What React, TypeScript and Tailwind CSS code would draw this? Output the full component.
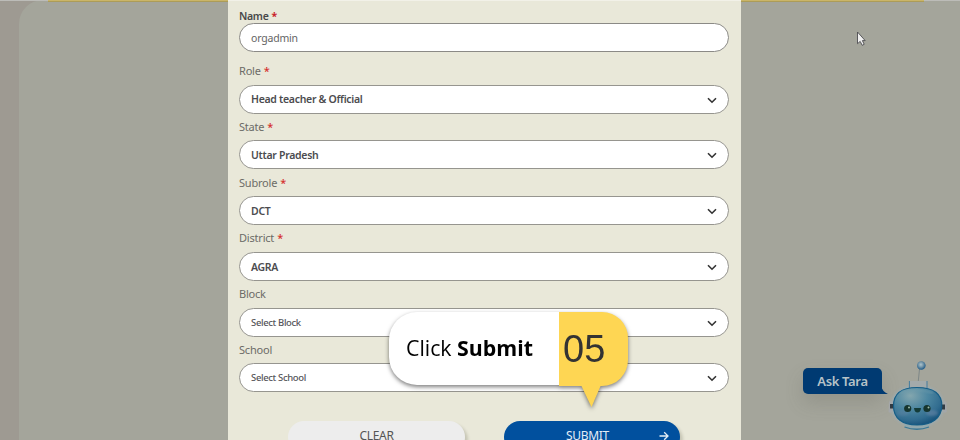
type Field = { label: string; value: string; required?: boolean; empty?: boolean };

const fields: Field[] = [
  { label: "Role", value: "Head teacher & Official", required: true },
  { label: "State", value: "Uttar Pradesh", required: true },
  { label: "Subrole", value: "DCT", required: true },
  { label: "District", value: "AGRA", required: true },
  { label: "Block", value: "Select Block", empty: true },
  { label: "School", value: "Select School", empty: true },
];

function SelectField({ label, value, required, empty }: Field) {
  return (
    <div className="h-[55.75px]">
      <div className="flex h-[21.5px] items-start text-[11px] leading-[15px] tracking-[-0.2px] text-[#6c6b67]">
        {label}
        {required && <span className="ml-[3px] font-medium text-[#d5302f]">*</span>}
      </div>
      <div className="flex h-[29px] items-center justify-between rounded-full border border-[#96958f] bg-white pr-[11px] pl-[11px]">
        <span className={empty ? "text-[9.5px] leading-[15px] font-medium tracking-[-0.35px] text-[#55555a]" : "pt-[1.5px] text-[10.5px] leading-[15px] font-semibold tracking-[-0.3px] text-[#4c4c4f]"}>
          {value}
        </span>
        <svg width="10" height="7" viewBox="0 0 10 7" className="mt-[2px]" fill="none" stroke="#333" strokeWidth="1.6">
          <path d="M1 1.2 L5 5.2 L9 1.2" />
        </svg>
      </div>
    </div>
  );
}

function ProfileForm() {
  return (
    <section className="h-full w-[512.5px] overflow-hidden border-t border-[#f2f1e8] bg-[#e9e8d9] pr-[11.5px] pl-[11px]">
      <div className="h-[62px] pt-[7px]">
        <div className="flex h-[15px] text-[10.5px] leading-[16px] font-semibold tracking-[-0.3px] text-[#48484a]">
          Name<span className="ml-[3px] font-bold text-[#c91f2b]">*</span>
        </div>
        <div className="flex h-[29px] items-center rounded-full border border-[#8b8a86] bg-white px-[11px] pt-[2px] text-[10.5px] tracking-[-0.2px] text-[#646464]">
          orgadmin
        </div>
      </div>
      {fields.map((f) => (
        <SelectField key={f.label} {...f} />
      ))}
      <div className="mt-[23px] flex gap-[39px] pl-[49px] text-[12px] leading-[9px] tracking-[-0.3px]">
        <div className="flex h-[32px] w-[177px] shrink-0 justify-center rounded-full bg-[#ededed] pt-[10px] text-[#555] shadow-[3px_3px_3px_rgba(80,80,60,0.22)]">
          <span className="h-[9px]">CLEAR</span>
        </div>
        <div className="flex h-[32px] w-[176px] shrink-0 justify-between rounded-full bg-[#01509e] pt-[10px] pr-[11px] pl-[62px] text-[#e4edf5] shadow-[3px_3px_3px_rgba(80,80,60,0.22)]">
          <span className="h-[9px]">SUBMIT</span>
          <svg width="10" height="10" viewBox="0 0 10 10" fill="none" stroke="#e4edf5" strokeWidth="1.3">
            <path d="M0.5 5 H9 M5.2 1.2 L9 5 L5.2 8.8" />
          </svg>
        </div>
      </div>
    </section>
  );
}

function Callout() {
  return (
    <div className="absolute top-[312px] left-[389px] flex h-[73px] w-[239px] drop-shadow-[0_2px_2px_rgba(0,0,0,0.5)]">
      <div className="flex w-[170px] items-center rounded-l-[28px] bg-white pb-[2px] pl-[17px] font-['Open_Sans',sans-serif] text-[21.3px] whitespace-pre text-black">
        <span>Click <b>Submit</b></span>
      </div>
      <div className="flex h-[74px] w-[69px] items-center rounded-r-[26px] bg-[#fed653] pl-[4px] font-['Liberation_Sans',sans-serif] text-[38px] text-[#333]">
        05
      </div>
      <svg className="absolute top-[73px] left-[192px]" width="20" height="22" viewBox="0 0 20 22">
        <path d="M0 0 H20 L10.5 22 Z" fill="#fed653" />
      </svg>
    </div>
  );
}

function Robot() {
  return (
    <svg className="absolute top-[358px] left-[884px]" width="68" height="76" viewBox="0 0 68 76">
      <defs>
        <radialGradient id="face" cx="35%" cy="22%" r="85%">
          <stop offset="0" stopColor="#83a6ae" />
          <stop offset="0.42" stopColor="#4d87a1" />
          <stop offset="0.75" stopColor="#326d90" />
          <stop offset="1" stopColor="#124d77" />
        </radialGradient>
        <radialGradient id="ball" cx="45%" cy="40%" r="60%">
          <stop offset="0" stopColor="#aec3cc" />
          <stop offset="0.45" stopColor="#7798aa" />
          <stop offset="1" stopColor="#1c5787" />
        </radialGradient>
        <filter id="soft" x="-20%" y="-20%" width="140%" height="140%">
          <feGaussianBlur stdDeviation="1" />
        </filter>
      </defs>
      <ellipse cx="33.5" cy="48" rx="27" ry="21.5" fill="#9daaae" filter="url(#soft)" />
      <path d="M35.5 11 L34.3 23" stroke="#747f82" strokeWidth="0.8" />
      <circle cx="37.3" cy="7.5" r="4.3" fill="url(#ball)" />
      <path d="M25 23 H43 V30 H25 Z" fill="#a3aaab" />
      <path d="M25.4 23 V30 M43 23 V30" stroke="#447d9e" strokeWidth="1" />
      <path d="M8 43 L5 43.5 L4.5 54 Q7.5 56 8.5 53 Z M60 43 L62.5 44 L62.8 54 Q59.5 56 59 53 Z" fill="#a4a7a9" />
      <path d="M6 46 H10 V50.5 H6 Z M57 46.5 H61 V51.5 H57 Z" fill="#303b43" />
      <path d="M20 66 H46 L44.5 70 Q33 73 21.5 70 Z" fill="#91a8ad" />
      <path d="M20.5 69 Q33 73.5 45 69" fill="none" stroke="#397693" strokeWidth="1.3" />
      <path d="M33 29.5 C50 29.5 58 36 57.8 48 C57.5 60 48 67 33 67 C18 67 9.5 60 9.5 48 C9.5 36 16 29.5 33 29.5Z" fill="url(#face)" stroke="#155d86" strokeWidth="1.2" />
      <path d="M17 35 Q32 29 49 35" fill="none" stroke="#75a0ad" strokeWidth="1" filter="url(#soft)" />
      <ellipse cx="48" cy="55" rx="6" ry="3" fill="#6784a5" opacity=".55" filter="url(#soft)" />
      <ellipse cx="19" cy="55" rx="6" ry="3" fill="#6784a5" opacity=".35" filter="url(#soft)" />
      <circle cx="23.7" cy="50.5" r="3.6" fill="#15352e" />
      <circle cx="43" cy="50.5" r="3.6" fill="#15352e" />
      <circle cx="25" cy="49.5" r="1" fill="#9dbaa9" />
      <circle cx="44.5" cy="49.5" r="1" fill="#9dbaa9" />
      <path d="M30 50 H37 Q36.5 54.5 33.5 54.5 Q30.5 54.5 30 50Z" fill="#143c38" />
    </svg>
  );
}

function ChatAssistant() {
  return (
    <>
      <div className="absolute top-[368px] left-[803px] flex h-[26px] w-[79px] items-center justify-center rounded-[5px] rounded-br-none bg-[#003a72] pt-[2px] text-[13px] font-semibold tracking-[-0.35px] text-[#b7c3c8] shadow-[0_9px_18px_rgba(90,90,80,0.22)]">
        Ask Tara
      </div>
      <svg className="absolute top-[386px] left-[881px]" width="7" height="8" viewBox="0 0 7 8">
        <path d="M0 0 Q1 5 7 8 H0Z" fill="#003a72" />
      </svg>
      <Robot />
    </>
  );
}

export default function App() {
  return (
    <main className="relative h-[440px] w-[960px] overflow-hidden bg-[#9e9a92] pl-[19px] font-['Noto_Sans',sans-serif]">
      <div className="flex h-full rounded-tl-[24px] bg-[#a4a59b] pl-[209px]">
        <ProfileForm />
      </div>
      <div className="absolute inset-x-0 top-0 flex h-px">
        <div className="w-[48px] bg-[#bcbcb8]" />
        <div className="w-[180px] bg-[#cab568]" />
        <div className="w-[513px] bg-[#f2f1e8]" />
        <div className="w-[183px] bg-[#cab568]" />
        <div className="flex-1 bg-[#bcbcb8]" />
      </div>
      <div className="absolute inset-x-0 top-px flex h-px">
        <div className="ml-[48px] w-[180px] bg-[#ac9c58]" />
        <div className="ml-[513px] w-[183px] bg-[#ac9c58]" />
      </div>
      <svg className="absolute top-[31px] left-[856px]" width="12" height="16" viewBox="0 0 12 16">
        <path d="M1.5 1 V12.7 L4.2 10.4 L6.2 14.3 L8.2 13.3 L6.4 9.6 H9.2 Z" fill="#f0f0f0" stroke="#4c4c50" strokeWidth="0.9" />
      </svg>
      <ChatAssistant />
      <Callout />
    </main>
  );
}
